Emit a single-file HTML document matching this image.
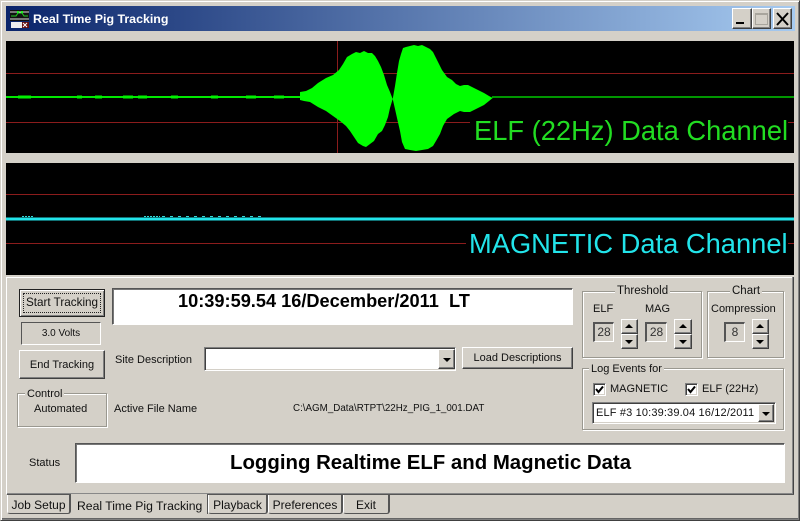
<!DOCTYPE html>
<html><head><meta charset="utf-8"><style>
html,body{margin:0;padding:0}
body{width:800px;height:521px;overflow:hidden;position:relative;background:#d4d0c8;font:11px "Liberation Sans",sans-serif;color:#111}
div,span{position:absolute;box-sizing:border-box;white-space:nowrap}
.btn{background:#d4d0c8;border:1px solid;border-color:#fff #404040 #404040 #fff;box-shadow:inset -1px -1px 0 #808080;text-align:center}
.sunk{border:1px solid;border-color:#808080 #fff #fff #808080;box-shadow:inset 1px 1px 0 #404040,inset -1px -1px 0 #d4d0c8}
.edge{border:1px solid;border-color:#555 #fff #fff #555;box-shadow:inset 1px 1px 0 #777}
.num{text-align:center;line-height:18px;color:#333;font-size:12px;box-shadow:none;border-width:2px 1px 1px 2px;line-height:17px}
.grp{border:1px solid #9a9890;box-shadow:1px 1px 0 #fff,inset 1px 1px 0 #fff}
.lg{background:#d4d0c8;padding:0 2px;line-height:13px}
.t{line-height:13px}
.tri{width:0;height:0;border-left:4px solid transparent;border-right:4px solid transparent}
.tab{border-style:solid;border-width:0 2px 1px 1px;border-color:#d4d0c8 #555 #555 #fff;border-radius:0 0 3px 3px;line-height:21px;text-align:center;height:19px;top:495px;font-size:12px}
</style></head><body>
<div style="left:0;top:0;width:800px;height:521px;border:1px solid;border-color:#d4d0c8 #404040 #404040 #d4d0c8;box-shadow:inset 1px 1px 0 #fff,inset -1px -1px 0 #808080"></div>
<div style="left:6px;top:6px;width:789px;height:25px;background:linear-gradient(90deg,#0a246a,#a6caf0)"></div>
<svg style="position:absolute;left:10px;top:10px" width="19" height="18"><rect x="0" y="0" width="19" height="11" fill="#111"/><path d="M0 2H19M0 9H19" stroke="#ddd"/><path d="M1 6H6L8 3H12L14 6H18" stroke="#2c2" fill="none"/><rect x="7" y="1" width="2" height="2" fill="#2e2"/><rect x="11" y="1" width="2" height="2" fill="#2e2"/><rect x="1" y="12" width="18" height="6" fill="#eee"/><rect x="12" y="12" width="7" height="6" fill="#611"/><path d="M13 13L17 17M17 13L13 17" stroke="#fff"/></svg>
<div class="t" style="left:33px;top:13px;color:#fff;font-weight:bold;font-size:12.400px">Real Time Pig Tracking</div>
<div class="btn" style="left:732px;top:8px;width:20px;height:21px"></div><div style="left:736px;top:22px;width:8px;height:2px;background:#000"></div>
<div class="btn" style="left:752px;top:8px;width:19px;height:21px"></div><div style="left:755px;top:13px;width:13px;height:12px;border:1px solid #a8a59d;border-top:2px solid #a8a59d"></div>
<div class="btn" style="left:773px;top:8px;width:19px;height:21px"></div>
<svg style="position:absolute;left:773px;top:8px" width="19" height="21"><path d="M4 5L15 17M15 5L4 17" stroke="#000" stroke-width="2" fill="none"/></svg>

<svg style="position:absolute;left:6px;top:41px" width="788" height="112">
<rect width="788" height="112" fill="#000"/>
<path d="M0 32.500H788M0 81.500H788M331.500 0V112" stroke="#8b1c1c" fill="none"/>
<path d="M0 56H296" stroke="#00e800" stroke-width="2"/>
<path d="M486 56H788" stroke="#00c800" stroke-width="1.500"/>
<path d="M12 56H25M71 56H76M89 56H96M117 56H127M132 56H141M165 56H172M205 56H212M240 56H250M268 56H278" stroke="#00f000" stroke-width="3" fill="none"/>
<polygon fill="#00ff00" points="294,51 300,50 306,47 312,42 320,37 327,34 333,29 337,23 341,16 346,13 350,11 354,12 358,10 362,12 366,12 369,15 372,20 375,26 378,34 381,44 384,51 386.700,58 389,45 391,32 393,20 395,13 397,7 400,6 404,5 408,4 412,5 416,4 420,6 424,8 427,11 430,17 433,23 436,29 441,36 446,39 450,43 454,45 458,44 462,44 466,46 472,49 478,52 483,55 486.700,57 483,60 478,64 470,68 464,71 458,71 454,70 448,73 441,78 437,85 434,93 430,100 427,105 422,108 416,109 410,110 404,109 399,108 396,101 394,90 391,77 389,68 386.700,58 384,67 382,76 379,84 376,90 372,93 368,100 364,103 360,106 357,105 352,102 348,96 344,90 340,85 334,80 327,75 320,70 312,66 304,61 298,60 294,59"/>
</svg>
<div style="left:470px;top:117px;width:318px;height:30px;background:#000"></div>
<div style="left:474px;top:116px;font-size:27.300px;line-height:30px;color:#22dd22">ELF (22Hz) Data Channel</div>

<svg style="position:absolute;left:6px;top:163px" width="788" height="112">
<rect width="788" height="112" fill="#000"/>
<path d="M0 31.500H788M0 80.500H788" stroke="#8b1c1c" fill="none"/>
<rect x="0" y="54.500" width="788" height="3" fill="#22e4ea"/>
<path d="M16 53.500H28M138 53.500H154" stroke="#33d8d8" stroke-dasharray="2 1" fill="none"/>
<path d="M156 53.500H260" stroke="#33d8d8" stroke-dasharray="3 5" fill="none"/>
</svg>
<div style="left:466px;top:230px;width:322px;height:28px;background:#000"></div>
<div style="left:469px;top:229px;font-size:27.300px;line-height:30px;color:#22e4ea">MAGNETIC Data Channel</div>

<div style="left:6px;top:277px;width:788px;height:1px;background:#fff"></div>
<div style="left:6px;top:277px;width:1px;height:217px;background:#fff"></div>
<div style="left:792px;top:277px;width:1px;height:217px;background:#888"></div>
<div style="left:793px;top:277px;width:1px;height:218px;background:#444"></div>
<div style="left:7px;top:493px;width:786px;height:1px;background:#888"></div>
<div style="left:7px;top:494px;width:64px;height:1px;background:#555"></div>
<div style="left:208px;top:494px;width:586px;height:1px;background:#555"></div>

<div class="btn" style="left:19px;top:289px;width:86px;height:28px;border:1px solid #222;line-height:26px;font-size:11.700px;box-shadow:inset 1px 1px 0 #fff,inset -1px -1px 0 #808080">Start Tracking</div>
<div style="left:23px;top:293px;width:78px;height:20px;border:1px dotted #222"></div>
<div class="edge" style="left:21px;top:322px;width:80px;height:23px;text-align:center;line-height:22px;font-size:10px;box-shadow:none">3.0 Volts</div>
<div class="btn" style="left:19px;top:350px;width:86px;height:29px;line-height:28px">End Tracking</div>
<div class="grp" style="left:17px;top:393px;width:90px;height:34px"></div>
<div class="lg" style="left:25px;top:388px">Control</div>
<div class="t" style="left:34px;top:403px">Automated</div>

<div class="edge" style="left:112px;top:288px;width:461px;height:37px;background:#fff"></div>
<div style="left:178px;top:290px;font-weight:bold;font-size:18.200px;line-height:22px;white-space:pre;color:#000">10:39:59.54 16/December/2011  LT</div>

<div class="t" style="left:115px;top:354px">Site Description</div>
<div class="sunk" style="left:204px;top:347px;width:252px;height:24px;background:#fff"></div>
<div class="btn" style="left:438px;top:349px;width:17px;height:20px"></div><div class="tri" style="left:443px;top:358px;border-top:4px solid #000"></div>
<div class="btn" style="left:462px;top:347px;width:111px;height:22px;line-height:21px">Load Descriptions</div>

<div class="t" style="left:114px;top:403px">Active File Name</div>
<div class="t" style="left:293px;top:402px;font-size:9.800px">C:\AGM_Data\RTPT\22Hz_PIG_1_001.DAT</div>

<div class="grp" style="left:582px;top:291px;width:120px;height:67px"></div>
<div class="lg" style="left:615px;top:285px;font-size:11.500px">Threshold</div>
<div class="t" style="left:593px;top:303px">ELF</div>
<div class="t" style="left:645px;top:303px">MAG</div>
<div class="edge num" style="left:593px;top:322px;width:21px;height:20px">28</div>
<div class="btn" style="left:621px;top:319px;width:17px;height:15px"></div><div class="tri" style="left:625px;top:324px;border-bottom:4px solid #000"></div>
<div class="btn" style="left:621px;top:334px;width:17px;height:15px"></div><div class="tri" style="left:625px;top:340px;border-top:4px solid #000"></div>
<div class="edge num" style="left:645px;top:322px;width:22px;height:20px">28</div>
<div class="btn" style="left:674px;top:319px;width:18px;height:15px"></div><div class="tri" style="left:679px;top:324px;border-bottom:4px solid #000"></div>
<div class="btn" style="left:674px;top:334px;width:18px;height:15px"></div><div class="tri" style="left:679px;top:340px;border-top:4px solid #000"></div>

<div class="grp" style="left:707px;top:291px;width:77px;height:67px"></div>
<div class="lg" style="left:730px;top:285px;font-size:11.500px">Chart</div>
<div class="t" style="left:711px;top:303px">Compression</div>
<div class="edge num" style="left:724px;top:322px;width:21px;height:20px">8</div>
<div class="btn" style="left:752px;top:319px;width:17px;height:15px"></div><div class="tri" style="left:756px;top:324px;border-bottom:4px solid #000"></div>
<div class="btn" style="left:752px;top:334px;width:17px;height:15px"></div><div class="tri" style="left:756px;top:340px;border-top:4px solid #000"></div>

<div class="grp" style="left:582px;top:368px;width:202px;height:62px"></div>
<div class="lg" style="left:589px;top:363px">Log Events for</div>
<div class="sunk" style="left:593px;top:383px;width:13px;height:13px;background:#fff"></div>
<svg style="position:absolute;left:593px;top:383px" width="13" height="13"><path d="M3 6L5.500 9L10 3.500" stroke="#000" stroke-width="2" fill="none"/></svg>
<div class="t" style="left:610px;top:383px">MAGNETIC</div>
<div class="sunk" style="left:685px;top:383px;width:13px;height:13px;background:#fff"></div>
<svg style="position:absolute;left:685px;top:383px" width="13" height="13"><path d="M3 6L5.500 9L10 3.500" stroke="#000" stroke-width="2" fill="none"/></svg>
<div class="t" style="left:702px;top:383px">ELF (22Hz)</div>
<div class="sunk" style="left:592px;top:402px;width:184px;height:22px;background:#fff;overflow:hidden"></div>
<div class="t" style="left:596px;top:407px;width:161px;overflow:hidden;letter-spacing:.15px">ELF #3 10:39:39.04 16/12/2011</div>
<div class="btn" style="left:758px;top:404px;width:16px;height:18px"></div><div class="tri" style="left:762px;top:412px;border-top:4px solid #000"></div>

<div class="t" style="left:29px;top:457px">Status</div>
<div class="edge" style="left:75px;top:443px;width:710px;height:40px;background:#fff"></div>
<div style="left:230px;top:452px;font-weight:bold;font-size:20.400px;line-height:22px;color:#000">Logging Realtime ELF and Magnetic Data</div>

<div class="tab" style="left:7px;width:64px">Job Setup</div>
<div style="left:207px;top:494px;width:1px;height:20px;background:#555"></div>
<div style="left:77px;top:499px;font-size:12.200px;line-height:15px">Real Time Pig Tracking</div>
<div class="tab" style="left:208px;width:60px">Playback</div>
<div class="tab" style="left:268px;width:75px">Preferences</div>
<div class="tab" style="left:343px;width:47px">Exit</div>
<div style="left:2px;top:518px;width:796px;height:1px;background:#666"></div>
</body></html>
